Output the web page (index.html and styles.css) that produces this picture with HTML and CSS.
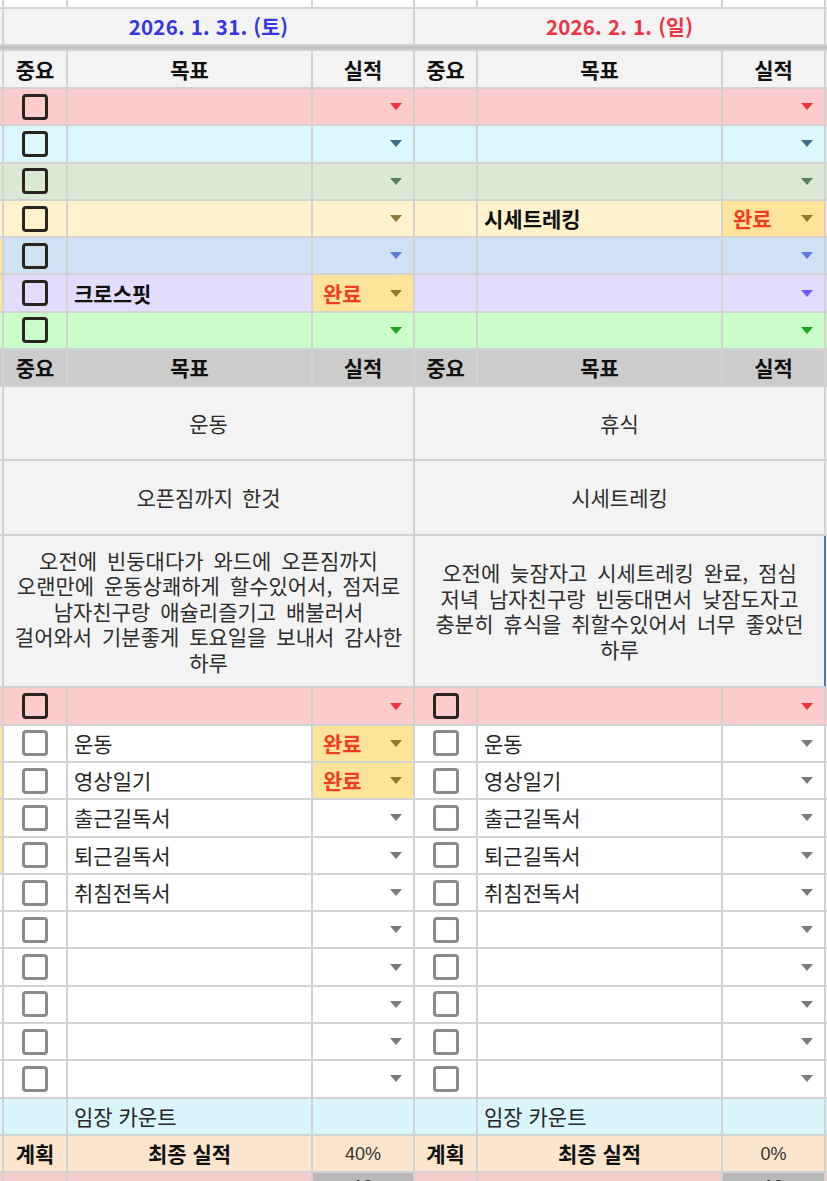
FILE: index.html
```html
<!DOCTYPE html>
<html lang="ko">
<head>
<meta charset="utf-8">
<title>Daily sheet</title>
<link rel="stylesheet" href="styles.css">
</head>
<body>
<div class="sheet">
  <!-- partial top row -->
  <div class="cell w"></div><div class="cell w"></div><div class="cell w"></div><div class="cell w"></div><div class="cell w"></div><div class="cell w"></div><div class="cell w"></div><div class="cell w"></div>

  <!-- dates -->
  <div class="cell lg"></div>
  <div class="cell lg span3 center date sat">2026. 1. 31. (토)</div>
  <div class="cell lg span3 center date sun">2026. 2. 1. (일)</div>
  <div class="cell lg"></div>

  <div class="sep"></div>

  <!-- header -->
  <div class="cell lg"></div>
  <div class="cell lg center b">중요</div><div class="cell lg center b">목표</div><div class="cell lg center b">실적</div>
  <div class="cell lg center b">중요</div><div class="cell lg center b">목표</div><div class="cell lg center b">실적</div>
  <div class="cell lg"></div>

  <!-- colored priority rows -->
  <div class="cell r-pink"></div>
  <div class="cell r-pink center"><span class="cb dark"></span></div><div class="cell r-pink"></div><div class="cell r-pink res"><i class="dd a-red"></i></div>
  <div class="cell r-pink"></div><div class="cell r-pink"></div><div class="cell r-pink res"><i class="dd a-red"></i></div>
  <div class="cell r-pink"></div>

  <div class="cell r-cyan"></div>
  <div class="cell r-cyan center"><span class="cb dark"></span></div><div class="cell r-cyan"></div><div class="cell r-cyan res"><i class="dd a-teal"></i></div>
  <div class="cell r-cyan"></div><div class="cell r-cyan"></div><div class="cell r-cyan res"><i class="dd a-teal"></i></div>
  <div class="cell r-cyan"></div>

  <div class="cell r-sage"></div>
  <div class="cell r-sage center"><span class="cb dark"></span></div><div class="cell r-sage"></div><div class="cell r-sage res"><i class="dd a-sage"></i></div>
  <div class="cell r-sage"></div><div class="cell r-sage"></div><div class="cell r-sage res"><i class="dd a-sage"></i></div>
  <div class="cell r-sage"></div>

  <div class="cell r-yellow"></div>
  <div class="cell r-yellow center"><span class="cb dark"></span></div><div class="cell r-yellow"></div><div class="cell r-yellow res"><i class="dd a-olive"></i></div>
  <div class="cell r-yellow"></div><div class="cell r-yellow txt b">시세트레킹</div><div class="cell done res"><span class="v">완료</span><i class="dd a-olive"></i></div>
  <div class="cell r-yellow"></div>

  <div class="cell done"></div>
  <div class="cell r-blue center"><span class="cb dark"></span></div><div class="cell r-blue"></div><div class="cell r-blue res"><i class="dd a-blue"></i></div>
  <div class="cell r-blue"></div><div class="cell r-blue"></div><div class="cell r-blue res"><i class="dd a-blue"></i></div>
  <div class="cell r-blue"></div>

  <div class="cell done"></div>
  <div class="cell r-lav center"><span class="cb dark"></span></div><div class="cell r-lav txt b">크로스핏</div><div class="cell done res"><span class="v">완료</span><i class="dd a-olive"></i></div>
  <div class="cell r-lav"></div><div class="cell r-lav"></div><div class="cell r-lav res"><i class="dd a-violet"></i></div>
  <div class="cell r-lav"></div>

  <div class="cell r-green"></div>
  <div class="cell r-green center"><span class="cb dark"></span></div><div class="cell r-green"></div><div class="cell r-green res"><i class="dd a-green"></i></div>
  <div class="cell r-green"></div><div class="cell r-green"></div><div class="cell r-green res"><i class="dd a-green"></i></div>
  <div class="cell r-green"></div>

  <!-- gray header -->
  <div class="cell gray"></div>
  <div class="cell gray center b">중요</div><div class="cell gray center b">목표</div><div class="cell gray center b">실적</div>
  <div class="cell gray center b">중요</div><div class="cell gray center b">목표</div><div class="cell gray center b">실적</div>
  <div class="cell gray"></div>

  <!-- summaries -->
  <div class="cell lg"></div>
  <div class="cell lg span3 center note">운동</div>
  <div class="cell lg span3 center note">휴식</div>
  <div class="cell lg"></div>

  <div class="cell lg"></div>
  <div class="cell lg span3 center note">오픈짐까지 한것</div>
  <div class="cell lg span3 center note">시세트레킹</div>
  <div class="cell lg"></div>

  <div class="cell lg"></div>
  <div class="cell lg span3 center note para"><p>오전에 빈둥대다가 와드에 오픈짐까지<br>오랜만에 운동상쾌하게 할수있어서, 점저로<br>남자친구랑 애슐리즐기고 배불러서<br>걸어와서 기분좋게 토요일을 보내서 감사한<br>하루</p></div>
  <div class="cell lg span3 center note para selected"><p>오전에 늦잠자고 시세트레킹 완료, 점심<br>저녁 남자친구랑 빈둥대면서 낮잠도자고<br>충분히 휴식을 취할수있어서 너무 좋았던<br>하루</p></div>
  <div class="cell lg"></div>

  <!-- pink row -->
  <div class="cell r-pink"></div>
  <div class="cell r-pink center"><span class="cb dark"></span></div><div class="cell r-pink"></div><div class="cell r-pink res"><i class="dd a-red"></i></div>
  <div class="cell r-pink center"><span class="cb dark"></span></div><div class="cell r-pink"></div><div class="cell r-pink res"><i class="dd a-red"></i></div>
  <div class="cell r-pink"></div>

  <!-- routine rows -->
  <div class="cell done"></div>
  <div class="cell w center"><span class="cb"></span></div><div class="cell w txt">운동</div><div class="cell done res"><span class="v">완료</span><i class="dd a-olive"></i></div>
  <div class="cell w center"><span class="cb"></span></div><div class="cell w txt">운동</div><div class="cell w res"><i class="dd a-gray"></i></div>
  <div class="cell w"></div>

  <div class="cell done"></div>
  <div class="cell w center"><span class="cb"></span></div><div class="cell w txt">영상일기</div><div class="cell done res"><span class="v">완료</span><i class="dd a-olive"></i></div>
  <div class="cell w center"><span class="cb"></span></div><div class="cell w txt">영상일기</div><div class="cell w res"><i class="dd a-gray"></i></div>
  <div class="cell w"></div>

  <div class="cell done"></div>
  <div class="cell w center"><span class="cb"></span></div><div class="cell w txt">출근길독서</div><div class="cell w res"><i class="dd a-gray"></i></div>
  <div class="cell w center"><span class="cb"></span></div><div class="cell w txt">출근길독서</div><div class="cell w res"><i class="dd a-gray"></i></div>
  <div class="cell w"></div>

  <div class="cell done"></div>
  <div class="cell w center"><span class="cb"></span></div><div class="cell w txt">퇴근길독서</div><div class="cell w res"><i class="dd a-gray"></i></div>
  <div class="cell w center"><span class="cb"></span></div><div class="cell w txt">퇴근길독서</div><div class="cell w res"><i class="dd a-gray"></i></div>
  <div class="cell w"></div>

  <div class="cell w"></div>
  <div class="cell w center"><span class="cb"></span></div><div class="cell w txt">취침전독서</div><div class="cell w res"><i class="dd a-gray"></i></div>
  <div class="cell w center"><span class="cb"></span></div><div class="cell w txt">취침전독서</div><div class="cell w res"><i class="dd a-gray"></i></div>
  <div class="cell w"></div>

  <!-- empty rows -->
  <div class="cell w"></div>
  <div class="cell w center"><span class="cb"></span></div><div class="cell w"></div><div class="cell w res"><i class="dd a-gray"></i></div>
  <div class="cell w center"><span class="cb"></span></div><div class="cell w"></div><div class="cell w res"><i class="dd a-gray"></i></div>
  <div class="cell w"></div>

  <div class="cell w"></div>
  <div class="cell w center"><span class="cb"></span></div><div class="cell w"></div><div class="cell w res"><i class="dd a-gray"></i></div>
  <div class="cell w center"><span class="cb"></span></div><div class="cell w"></div><div class="cell w res"><i class="dd a-gray"></i></div>
  <div class="cell w"></div>

  <div class="cell w"></div>
  <div class="cell w center"><span class="cb"></span></div><div class="cell w"></div><div class="cell w res"><i class="dd a-gray"></i></div>
  <div class="cell w center"><span class="cb"></span></div><div class="cell w"></div><div class="cell w res"><i class="dd a-gray"></i></div>
  <div class="cell w"></div>

  <div class="cell w"></div>
  <div class="cell w center"><span class="cb"></span></div><div class="cell w"></div><div class="cell w res"><i class="dd a-gray"></i></div>
  <div class="cell w center"><span class="cb"></span></div><div class="cell w"></div><div class="cell w res"><i class="dd a-gray"></i></div>
  <div class="cell w"></div>

  <div class="cell w"></div>
  <div class="cell w center"><span class="cb"></span></div><div class="cell w"></div><div class="cell w res"><i class="dd a-gray"></i></div>
  <div class="cell w center"><span class="cb"></span></div><div class="cell w"></div><div class="cell w res"><i class="dd a-gray"></i></div>
  <div class="cell w"></div>

  <!-- count row -->
  <div class="cell sky"></div>
  <div class="cell sky"></div><div class="cell sky txt">임장 카운트</div><div class="cell sky"></div>
  <div class="cell sky"></div><div class="cell sky txt">임장 카운트</div><div class="cell sky"></div>
  <div class="cell sky"></div>

  <!-- result row -->
  <div class="cell peach"></div>
  <div class="cell peach center b">계획</div><div class="cell peach center b">최종 실적</div><div class="cell peach center num">40%</div>
  <div class="cell peach center b">계획</div><div class="cell peach center b">최종 실적</div><div class="cell peach center num">0%</div>
  <div class="cell peach"></div>

  <!-- partial bottom row -->
  <div class="cell rose"></div>
  <div class="cell rose"></div><div class="cell rose"></div><div class="cell dim clip">10</div>
  <div class="cell rose"></div><div class="cell rose"></div><div class="cell dim clip">10</div>
  <div class="cell rose"></div>
</div>
</body>
</html>
```

FILE: styles.css
```css
html, body {
  margin: 0;
  padding: 0;
  background: #ffffff;
}

body {
  font-family: "Noto Sans CJK KR", "Liberation Sans", sans-serif;
  color: #222;
}

.sheet {
  display: grid;
  grid-template-columns: 2px 62px 243px 100px 61px 243px 101px 1px;
  grid-template-rows: 7px 35px 3px 36px repeat(8, 35.3px) 72px 73px 150px repeat(13, 35.3px) 30px;
  gap: 2px;
  background: #d2d2d2;
  width: 827px;
  height: 1181px;
  overflow: hidden;
}

.cell {
  display: flex;
  align-items: center;
  min-width: 0;
  overflow: hidden;
  white-space: nowrap;
  font-size: 21px;
  line-height: 1;
}

.span3 { grid-column: span 3; }
.center { justify-content: center; }
.b { font-weight: 700; color: #111; }

.sep {
  grid-column: 1 / -1;
  background: #c3c3c3;
}

/* backgrounds */
.w { background: #ffffff; }
.lg { background: #f3f3f3; }
.gray { background: #cccccc; }
.r-pink { background: #fdcdcd; }
.r-cyan { background: #ddf7fe; }
.r-sage { background: #d9e9d3; }
.r-yellow { background: #fff2cc; }
.r-blue { background: #cfe1f3; }
.r-lav { background: #e3dcfc; }
.r-green { background: #cbfdcb; }
.done { background: #fde49a; }
.sky { background: #dbf5fd; }
.peach { background: #fce5cd; }
.rose { background: #f6cccc; }
.dim { background: #b8b8b8; }

/* dates */
.date { font-weight: 700; font-size: 20.5px; letter-spacing: 0.2px; }
.sat { color: #3636e2; }
.sun { color: #ee3442; }

/* text cells */
.txt { padding-left: 6px; color: #262626; }
.txt.b { color: #111; }
.note { color: #2e2e2e; text-align: center; word-spacing: 3px; }
.para p {
  margin: 0;
  line-height: 25.5px;
  word-spacing: 4px;
}
.selected { box-shadow: 2px 0 0 #4f6fdc; position: relative; }
.num { color: #333; font-family: "Liberation Sans", "Noto Sans CJK KR", sans-serif; font-size: 18px; }
.clip {
  justify-content: center;
  align-items: flex-start;
  padding-top: 5px;
  font-family: "Liberation Sans", sans-serif;
  font-size: 18px;
  color: #222;
}

/* checkbox */
.cb {
  display: block;
  width: 20px;
  height: 20px;
  border: 3px solid #8a8a8a;
  border-radius: 4px;
  box-sizing: content-box;
}
.cb.dark { border-color: #2a2421; }

/* result + dropdown */
.res {
  justify-content: space-between;
  padding: 0 11px 0 10px;
}
.v { color: #f23c1d; font-weight: 700; }
.dd {
  display: block;
  width: 0;
  height: 0;
  margin-left: auto;
  border-left: 6px solid transparent;
  border-right: 6px solid transparent;
  border-top: 7px solid currentColor;
}
.a-red { color: #f0343a; }
.a-teal { color: #3f6c8c; }
.a-sage { color: #5b805b; }
.a-olive { color: #8c7a30; }
.a-blue { color: #6578e2; }
.a-violet { color: #6e5ff2; }
.a-green { color: #1ea51e; }
.a-gray { color: #7b7b7b; }
```
